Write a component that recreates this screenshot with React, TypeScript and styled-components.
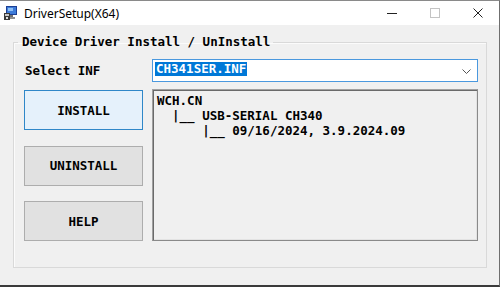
import styled, { createGlobalStyle } from "styled-components";

const GlobalStyle = createGlobalStyle`
  html, body {
    margin: 0;
    padding: 0;
    background: #f0f0f0;
  }
  * {
    box-sizing: border-box;
  }
`;

const mono = `"DejaVu Sans Mono", "Liberation Mono", monospace`;

function AppIcon() {
  return (
    <svg width="16" height="16" viewBox="0 0 16 16">
      <rect x="3" y="1" width="11" height="9" fill="#1c3f94" />
      <rect x="4" y="2" width="9" height="7" fill="#3d7bd8" />
      <rect x="5" y="3" width="5" height="3" fill="#8fc0f5" />
      <rect x="7" y="10" width="3" height="2" fill="#707070" />
      <rect x="5" y="12" width="7" height="2" fill="#909090" />
      <rect x="1" y="8" width="6" height="7" fill="#3a3a3a" />
      <rect x="2" y="9" width="4" height="2" fill="#c8c8c8" />
      <rect x="3" y="12" width="2" height="2" fill="#e0e0e0" />
    </svg>
  );
}

const lines = ["WCH.CN", "  |__ USB-SERIAL CH340", "      |__ 09/16/2024, 3.9.2024.09"];

export default function App() {
  return (
    <>
      <GlobalStyle />
      <Window>
        <TitleBar>
          <TitleLeft>
            <AppIcon />
            <TitleText>DriverSetup(X64)</TitleText>
          </TitleLeft>
          <Caption>
            <CaptionButton>
              <svg width="10" height="10" viewBox="0 0 10 10">
                <line x1="0" y1="5.5" x2="10" y2="5.5" stroke="#222" strokeWidth="1" />
              </svg>
            </CaptionButton>
            <CaptionButton>
              <svg width="10" height="10" viewBox="0 0 10 10">
                <rect x="0.5" y="0.5" width="9" height="9" fill="none" stroke="#c4c4c4" strokeWidth="1" />
              </svg>
            </CaptionButton>
            <CaptionButton>
              <svg width="10" height="10" viewBox="0 0 10 10">
                <path d="M0.5 0.5 L9.5 9.5 M9.5 0.5 L0.5 9.5" stroke="#222" strokeWidth="1" />
              </svg>
            </CaptionButton>
          </Caption>
        </TitleBar>
        <Body>
          <Group>
            <Legend>Device Driver Install / UnInstall</Legend>
            <Grid>
              <Label>Select INF</Label>
              <Combo>
                <Selected>CH341SER.INF</Selected>
                <svg width="9" height="6" viewBox="0 0 9 6">
                  <path d="M0.5 0.5 L4.5 4.5 L8.5 0.5" fill="none" stroke="#555" strokeWidth="1" />
                </svg>
              </Combo>
              <Buttons>
                <Button $focused>INSTALL</Button>
                <Button>UNINSTALL</Button>
                <Button>HELP</Button>
              </Buttons>
              <Output>
                {lines.map((l) => (
                  <Line key={l}>{l}</Line>
                ))}
              </Output>
            </Grid>
          </Group>
        </Body>
      </Window>
    </>
  );
}

const Window = styled.div`
  width: 500px;
  height: 287px;
  display: flex;
  flex-direction: column;
  background: #f0f0f0;
  border-top: 1px solid #8a8a8a;
  border-right: 1px solid #6f6f6f;
  border-bottom: 2px solid #3a3a3a;
  overflow: hidden;
`;

const TitleBar = styled.div`
  height: 24px;
  flex: none;
  background: #ffffff;
  display: flex;
  align-items: center;
  justify-content: space-between;
`;

const TitleLeft = styled.div`
  display: flex;
  align-items: center;
  gap: 5px;
  padding-left: 3px;
`;

const TitleText = styled.span`
  font-family: "Noto Sans", "Open Sans", sans-serif;
  font-size: 12px;
  color: #000;
`;

const Caption = styled.div`
  display: flex;
  align-items: center;
  height: 100%;
`;

const CaptionButton = styled.div`
  width: 43px;
  height: 100%;
  display: flex;
  align-items: center;
  justify-content: center;
`;

const Body = styled.div`
  flex: 1;
  padding: 9px 12px 0 13px;
`;

const Group = styled.fieldset`
  margin: 0;
  padding: 9px 8px 26px 10px;
  border: 1px solid #d9d9d9;
  box-shadow: inset 1px 1px 0 #fbfbfb;
  min-width: 0;
`;

const Legend = styled.legend`
  margin-left: -6px;
  padding: 0 3px 0 4px;
  font-family: ${mono};
  font-weight: bold;
  font-size: 12.5px;
  line-height: 16px;
  color: #000;
`;

const Grid = styled.div`
  display: grid;
  grid-template-columns: 119px 326px;
  grid-template-rows: 23px 152px;
  column-gap: 9px;
  row-gap: 7px;
`;

const Label = styled.div`
  display: flex;
  align-items: center;
  padding-left: 1px;
  font-family: ${mono};
  font-weight: bold;
  font-size: 12.5px;
  color: #000;
`;

const Combo = styled.div`
  display: flex;
  align-items: flex-start;
  justify-content: space-between;
  padding: 2px 6px 0 2px;
  background: #ffffff;
  border: 1px solid #4a98de;
  svg {
    margin-top: 7px;
  }
`;

const Selected = styled.span`
  background: #0078d7;
  color: #ffffff;
  font-family: ${mono};
  font-weight: bold;
  font-size: 12.5px;
  line-height: 14px;
  padding: 0 1px;
`;

const Buttons = styled.div`
  display: flex;
  flex-direction: column;
  justify-content: space-between;
  padding-top: 1px;
`;

const Button = styled.div<{ $focused?: boolean }>`
  height: 40px;
  display: flex;
  align-items: center;
  justify-content: center;
  background: ${({ $focused }) => ($focused ? "#e5f1fb" : "#e1e1e1")};
  border: 1px solid ${({ $focused }) => ($focused ? "#2f87c8" : "#adadad")};
  font-family: ${mono};
  font-weight: bold;
  font-size: 12.5px;
  color: #000;
`;

const Output = styled.div`
  background: #f0f0f0;
  border: 1px solid #a0a0a0;
  border-right-color: #8a8a8a;
  border-bottom-color: #8a8a8a;
  box-shadow: inset 1px 1px 0 #6a6a6a, inset -1px -1px 0 #e3e3e3;
  padding: 3px 4px;
`;

const Line = styled.div`
  font-family: ${mono};
  font-weight: bold;
  font-size: 12.5px;
  line-height: 15px;
  white-space: pre;
  color: #000;
`;
